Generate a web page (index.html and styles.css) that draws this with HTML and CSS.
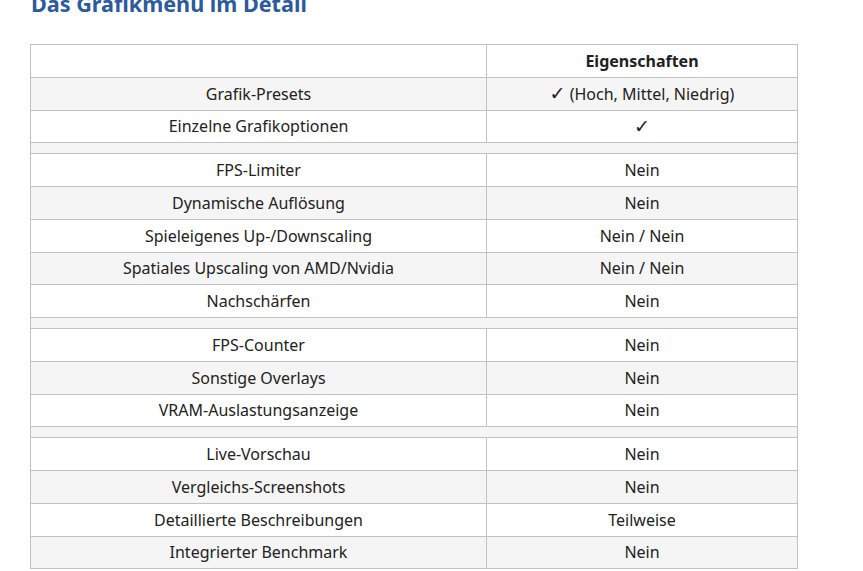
FILE: index.html
```html
<!DOCTYPE html>
<html lang="de">
<head>
<meta charset="utf-8">
<link rel="stylesheet" href="styles.css">
</head>
<body>
<div class="article">
  <h2 class="title">Das Grafikmenu im Detail</h2>
  <table class="spec">
    <colgroup><col class="c1"><col class="c2"></colgroup>
    <tr class="head"><td></td><th>Eigenschaften</th></tr>
    <tr><td>Grafik-Presets</td><td><span class="check">✓</span> (Hoch, Mittel, Niedrig)</td></tr>
    <tr><td>Einzelne Grafikoptionen</td><td><span class="check">✓</span></td></tr>
    <tr class="gap"><td colspan="2"></td></tr>
    <tr><td>FPS-Limiter</td><td>Nein</td></tr>
    <tr><td>Dynamische Auflösung</td><td>Nein</td></tr>
    <tr><td>Spieleigenes Up-/Downscaling</td><td>Nein / Nein</td></tr>
    <tr><td>Spatiales Upscaling von AMD/Nvidia</td><td>Nein / Nein</td></tr>
    <tr><td>Nachschärfen</td><td>Nein</td></tr>
    <tr class="gap"><td colspan="2"></td></tr>
    <tr><td>FPS-Counter</td><td>Nein</td></tr>
    <tr><td>Sonstige Overlays</td><td>Nein</td></tr>
    <tr><td>VRAM-Auslastungsanzeige</td><td>Nein</td></tr>
    <tr class="gap"><td colspan="2"></td></tr>
    <tr><td>Live-Vorschau</td><td>Nein</td></tr>
    <tr><td>Vergleichs-Screenshots</td><td>Nein</td></tr>
    <tr><td>Detaillierte Beschreibungen</td><td>Teilweise</td></tr>
    <tr><td>Integrierter Benchmark</td><td>Nein</td></tr>
  </table>
</div>
</body>
</html>
```
FILE: styles.css
```css
html, body {
  margin: 0;
  padding: 0;
  background: #fff;
}
.article {
  padding-left: 30px;
  font-family: "Noto Sans", "Open Sans", sans-serif;
  color: #222;
}
.title {
  margin: -7px 0 0 1px;
  font-size: 21.6px;
  line-height: 22px;
  font-weight: 700;
  color: #2c5a9c;
  height: 51px;
}
.spec {
  border-collapse: collapse;
  width: 768px;
  font-size: 16px;
  table-layout: fixed;
}
.c1 { width: 456px; }
.spec td, .spec th {
  border: 1px solid #c2c2c2;
  text-align: center;
  padding: 0 8px;
  height: 31.75px;
  line-height: 20px;
}
.spec th { font-weight: 700; }
.spec tr:nth-child(even) { background: #f5f5f5; }
.spec tr.gap td {
  height: 10px;
  padding: 0;
}
.check {
  font-family: "DejaVu Sans", sans-serif;
  font-size: 19px;
  line-height: 20px;
}
```
